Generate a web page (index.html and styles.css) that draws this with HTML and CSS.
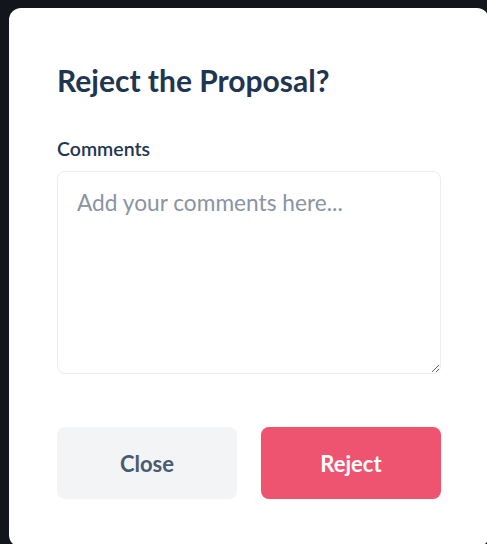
FILE: index.html
```html
<!DOCTYPE html>
<html lang="en">
<head>
<meta charset="utf-8">
<title>Reject the Proposal?</title>
<link rel="stylesheet" href="styles.css">
</head>
<body>
<div class="modal">
  <h2 class="title">Reject the Proposal?</h2>
  <label class="label" for="comments">Comments</label>
  <textarea id="comments" class="comments" placeholder="Add your comments here..."></textarea>
  <div class="actions">
    <button class="btn btn-close" type="button">Close</button>
    <button class="btn btn-reject" type="button">Reject</button>
  </div>
</div>
</body>
</html>
```

FILE: styles.css
```css
html, body {
  margin: 0;
  height: 100%;
}
body {
  background: #12151b;
  font-family: Lato, "Open Sans", sans-serif;
  overflow: hidden;
}
.modal {
  margin: 8px 0 0 9px;
  width: 480px;
  box-sizing: border-box;
  padding: 54px 48px 48px;
  background: #ffffff;
  border-radius: 12px;
  display: flex;
  flex-direction: column;
}
.title {
  margin: 0;
  font-size: 30px;
  line-height: 36px;
  font-weight: 700;
  color: #1f3652;
}
.label {
  margin-top: 39px;
  font-size: 19.5px;
  line-height: 24px;
  font-weight: 600;
  color: #1f3652;
}
.comments {
  margin-top: 10px;
  height: 203px;
  box-sizing: border-box;
  padding: 14px 19px;
  border: 1px solid #ececee;
  border-radius: 8px;
  font-family: inherit;
  font-size: 22.7px;
  line-height: 33px;
  color: #1f3652;
  outline: none;
}
.comments::placeholder {
  color: #8a94a3;
}
.actions {
  margin-top: 53px;
  display: flex;
  gap: 24px;
}
.btn {
  width: 180px;
  height: 72px;
  border: none;
  border-radius: 8px;
  font-family: inherit;
  font-size: 22px;
  font-weight: 700;
  cursor: pointer;
}
.btn-close {
  background: #f3f4f6;
  color: #4a5a70;
}
.btn-reject {
  background: #ee5470;
  color: #ffffff;
}
```
